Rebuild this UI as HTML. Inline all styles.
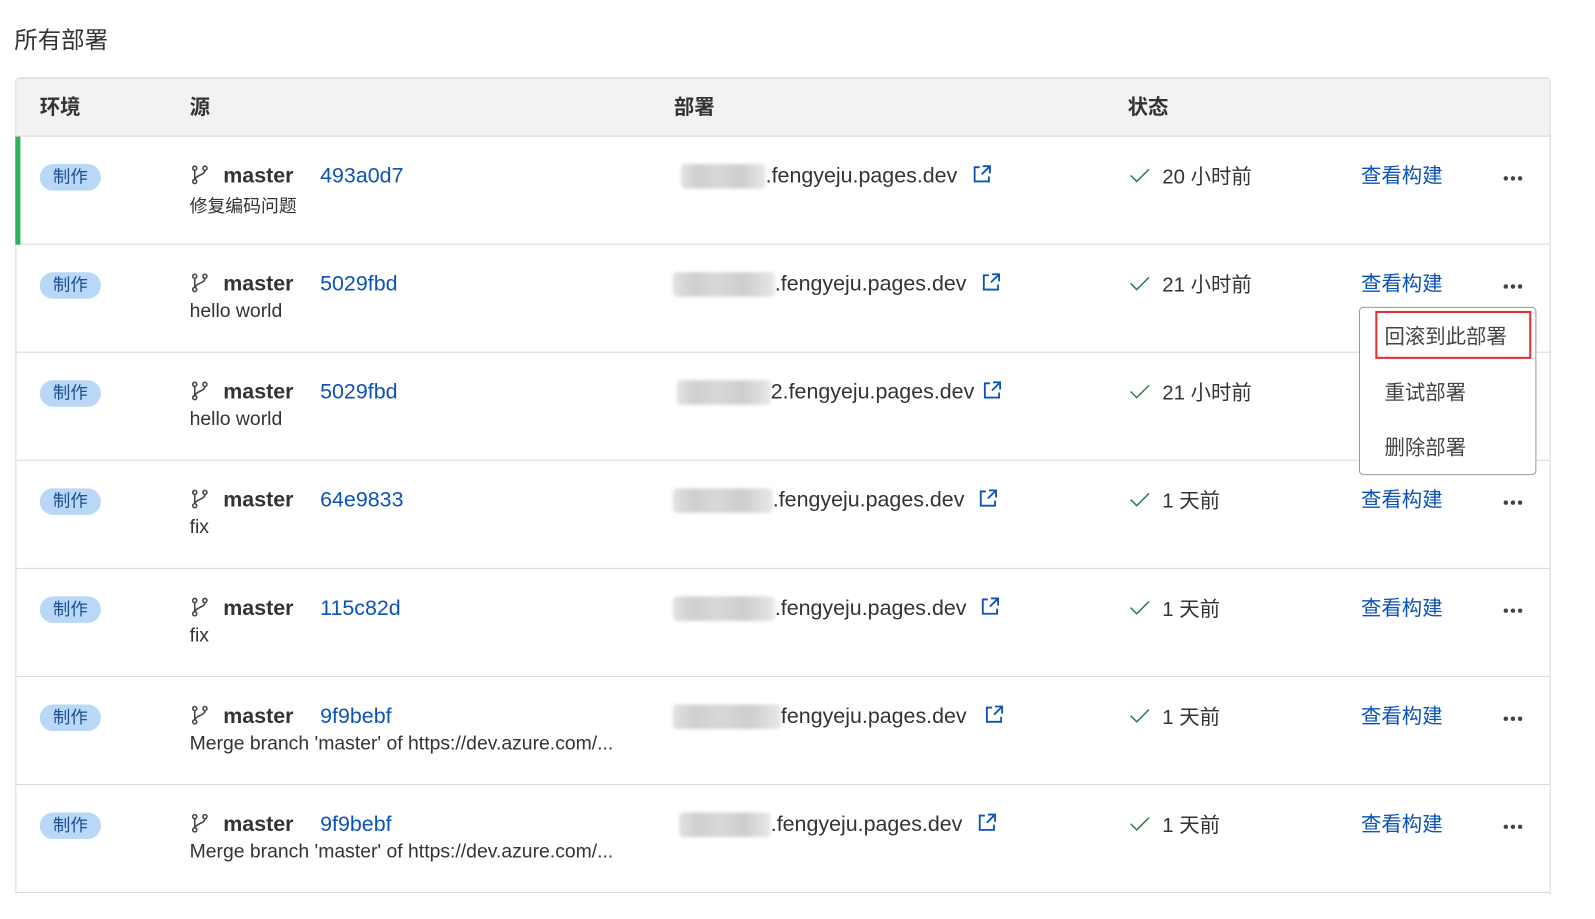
<!DOCTYPE html>
<html><head><meta charset="utf-8"><style>
*{margin:0;padding:0;box-sizing:border-box}
body{width:1595px;height:919px;background:#fff;font-family:"Liberation Sans","Noto Sans CJK SC",sans-serif;color:#333;position:relative;overflow:hidden}
#w{position:absolute;left:0;top:0;width:1565px;height:901px;transform:scale(1.0195);transform-origin:0 0}
.title{position:absolute;left:14px;top:20px;font-size:23px;color:#333}
.tbl{position:absolute;left:15px;top:76px;width:1506px;height:801px;border:1px solid #cfcfcf;border-radius:4px 4px 0 0;border-bottom:none}
.hdr{position:absolute;left:0;top:0;width:100%;height:57px;background:#f2f2f2;border-bottom:1px solid #d6d6d6}
.hdr span{position:absolute;top:12px;font-size:20px;font-weight:bold;color:#333}
.row{position:absolute;left:0;width:100%;height:106px;border-bottom:1px solid #d9d9d9}
.a{position:absolute;white-space:nowrap}
.badge{left:23px;top:27px;width:60px;height:26px;border-radius:13px;background:#b9d7f7;color:#1d4f91;font-size:17px;text-align:center;line-height:26px}
.br{left:171px;top:28px}
.m{left:203px;top:27px;font-size:21px;font-weight:bold;color:#333}
.h{left:298px;top:27px;font-size:21px;color:#0b53b6}
.s{left:170px;top:55px;font-size:19px;color:#333}
.s.cn{font-size:17.5px}
.blur{top:27px;height:24px;background:linear-gradient(90deg,#e2e2e2,#cfcfcf 20%,#d8d8d8 45%,#cdcdcd 70%,#e8e8e8);border-radius:4px;filter:blur(1.5px)}
.d{top:27px;font-size:21px;color:#333}
.ck{left:1092px;top:31px}
.t{left:1124px;top:23px;font-size:20px;color:#333}
.v{left:1319px;top:22px;font-size:20px;color:#0b53b6}
.dots{left:1458px;top:38px}
.menu{position:absolute;left:1333px;top:301px;width:174px;height:165px;border:1px solid #9a9a9a;border-radius:4px;background:#fff}
.menu div{position:absolute;left:24px;font-size:20px;color:#444}
.red{position:absolute;left:1349px;top:305px;width:153px;height:47px;border:2px solid #e03030}
</style></head><body><div id="w">
<div class="title">所有部署</div>
<div class="tbl">
<div class="hdr"><span style="left:23px">环境</span><span style="left:170px">源</span><span style="left:645px">部署</span><span style="left:1090px">状态</span></div>
<div style="position:absolute;left:-1px;top:57px;width:5px;height:106px;background:#2fae5c;z-index:2"></div>

<div class="row" style="top:57px">
<div class="a badge">制作</div>
<svg class="a br" width="18" height="20" viewBox="0 0 18 20"><g fill="none" stroke="#444" stroke-width="1.5"><circle cx="4" cy="3" r="2"/><circle cx="4" cy="16" r="2"/><circle cx="14" cy="3" r="2"/><path d="M4 5v9M14 5c0 5-8 4-10 9"/></g></svg>
<div class="a m">master</div><div class="a h">493a0d7</div><div class="a s cn">修复编码问题</div>
<div class="a blur" style="left:652px;width:83px"></div><div class="a d" style="left:735px">.fengyeju.pages.dev</div>
<svg class="a" style="left:937px;top:27px" width="20" height="20" viewBox="0 0 20 20"><path d="M8 3H3v14h14v-5M11 2h7v7M18 2l-8 8" fill="none" stroke="#0b53b6" stroke-width="1.8"/></svg>
<svg class="a ck" width="20" height="14" viewBox="0 0 20 14"><path d="M1 7l6 6L19 1" fill="none" stroke="#2f7d4f" stroke-width="1.5"/></svg>
<div class="a t">20 小时前</div><div class="a v">查看构建</div><svg class="a dots" width="20" height="6"><circle cx="3" cy="3" r="2.2" fill="#444"/><circle cx="10" cy="3" r="2.2" fill="#444"/><circle cx="17" cy="3" r="2.2" fill="#444"/></svg>
</div>

<div class="row" style="top:163px">
<div class="a badge">制作</div>
<svg class="a br" width="18" height="20" viewBox="0 0 18 20"><g fill="none" stroke="#444" stroke-width="1.5"><circle cx="4" cy="3" r="2"/><circle cx="4" cy="16" r="2"/><circle cx="14" cy="3" r="2"/><path d="M4 5v9M14 5c0 5-8 4-10 9"/></g></svg>
<div class="a m">master</div><div class="a h">5029fbd</div><div class="a s">hello world</div>
<div class="a blur" style="left:644px;width:100px"></div><div class="a d" style="left:744px">.fengyeju.pages.dev</div>
<svg class="a" style="left:946px;top:27px" width="20" height="20" viewBox="0 0 20 20"><path d="M8 3H3v14h14v-5M11 2h7v7M18 2l-8 8" fill="none" stroke="#0b53b6" stroke-width="1.8"/></svg>
<svg class="a ck" width="20" height="14" viewBox="0 0 20 14"><path d="M1 7l6 6L19 1" fill="none" stroke="#2f7d4f" stroke-width="1.5"/></svg>
<div class="a t">21 小时前</div><div class="a v">查看构建</div><svg class="a dots" width="20" height="6"><circle cx="3" cy="3" r="2.2" fill="#444"/><circle cx="10" cy="3" r="2.2" fill="#444"/><circle cx="17" cy="3" r="2.2" fill="#444"/></svg>
</div>

<div class="row" style="top:269px">
<div class="a badge">制作</div>
<svg class="a br" width="18" height="20" viewBox="0 0 18 20"><g fill="none" stroke="#444" stroke-width="1.5"><circle cx="4" cy="3" r="2"/><circle cx="4" cy="16" r="2"/><circle cx="14" cy="3" r="2"/><path d="M4 5v9M14 5c0 5-8 4-10 9"/></g></svg>
<div class="a m">master</div><div class="a h">5029fbd</div><div class="a s">hello world</div>
<div class="a blur" style="left:648px;width:92px"></div><div class="a d" style="left:740px">2.fengyeju.pages.dev</div>
<svg class="a" style="left:947px;top:27px" width="20" height="20" viewBox="0 0 20 20"><path d="M8 3H3v14h14v-5M11 2h7v7M18 2l-8 8" fill="none" stroke="#0b53b6" stroke-width="1.8"/></svg>
<svg class="a ck" width="20" height="14" viewBox="0 0 20 14"><path d="M1 7l6 6L19 1" fill="none" stroke="#2f7d4f" stroke-width="1.5"/></svg>
<div class="a t">21 小时前</div>
</div>

<div class="row" style="top:375px">
<div class="a badge">制作</div>
<svg class="a br" width="18" height="20" viewBox="0 0 18 20"><g fill="none" stroke="#444" stroke-width="1.5"><circle cx="4" cy="3" r="2"/><circle cx="4" cy="16" r="2"/><circle cx="14" cy="3" r="2"/><path d="M4 5v9M14 5c0 5-8 4-10 9"/></g></svg>
<div class="a m">master</div><div class="a h">64e9833</div><div class="a s">fix</div>
<div class="a blur" style="left:644px;width:98px"></div><div class="a d" style="left:742px">.fengyeju.pages.dev</div>
<svg class="a" style="left:943px;top:27px" width="20" height="20" viewBox="0 0 20 20"><path d="M8 3H3v14h14v-5M11 2h7v7M18 2l-8 8" fill="none" stroke="#0b53b6" stroke-width="1.8"/></svg>
<svg class="a ck" width="20" height="14" viewBox="0 0 20 14"><path d="M1 7l6 6L19 1" fill="none" stroke="#2f7d4f" stroke-width="1.5"/></svg>
<div class="a t">1 天前</div><div class="a v">查看构建</div><svg class="a dots" width="20" height="6"><circle cx="3" cy="3" r="2.2" fill="#444"/><circle cx="10" cy="3" r="2.2" fill="#444"/><circle cx="17" cy="3" r="2.2" fill="#444"/></svg>
</div>

<div class="row" style="top:481px">
<div class="a badge">制作</div>
<svg class="a br" width="18" height="20" viewBox="0 0 18 20"><g fill="none" stroke="#444" stroke-width="1.5"><circle cx="4" cy="3" r="2"/><circle cx="4" cy="16" r="2"/><circle cx="14" cy="3" r="2"/><path d="M4 5v9M14 5c0 5-8 4-10 9"/></g></svg>
<div class="a m">master</div><div class="a h">115c82d</div><div class="a s">fix</div>
<div class="a blur" style="left:644px;width:100px"></div><div class="a d" style="left:744px">.fengyeju.pages.dev</div>
<svg class="a" style="left:945px;top:27px" width="20" height="20" viewBox="0 0 20 20"><path d="M8 3H3v14h14v-5M11 2h7v7M18 2l-8 8" fill="none" stroke="#0b53b6" stroke-width="1.8"/></svg>
<svg class="a ck" width="20" height="14" viewBox="0 0 20 14"><path d="M1 7l6 6L19 1" fill="none" stroke="#2f7d4f" stroke-width="1.5"/></svg>
<div class="a t">1 天前</div><div class="a v">查看构建</div><svg class="a dots" width="20" height="6"><circle cx="3" cy="3" r="2.2" fill="#444"/><circle cx="10" cy="3" r="2.2" fill="#444"/><circle cx="17" cy="3" r="2.2" fill="#444"/></svg>
</div>

<div class="row" style="top:587px">
<div class="a badge">制作</div>
<svg class="a br" width="18" height="20" viewBox="0 0 18 20"><g fill="none" stroke="#444" stroke-width="1.5"><circle cx="4" cy="3" r="2"/><circle cx="4" cy="16" r="2"/><circle cx="14" cy="3" r="2"/><path d="M4 5v9M14 5c0 5-8 4-10 9"/></g></svg>
<div class="a m">master</div><div class="a h">9f9bebf</div><div class="a s">Merge branch 'master' of https://dev.azure.com/...</div>
<div class="a blur" style="left:644px;width:106px"></div><div class="a d" style="left:750px">fengyeju.pages.dev</div>
<svg class="a" style="left:949px;top:27px" width="20" height="20" viewBox="0 0 20 20"><path d="M8 3H3v14h14v-5M11 2h7v7M18 2l-8 8" fill="none" stroke="#0b53b6" stroke-width="1.8"/></svg>
<svg class="a ck" width="20" height="14" viewBox="0 0 20 14"><path d="M1 7l6 6L19 1" fill="none" stroke="#2f7d4f" stroke-width="1.5"/></svg>
<div class="a t">1 天前</div><div class="a v">查看构建</div><svg class="a dots" width="20" height="6"><circle cx="3" cy="3" r="2.2" fill="#444"/><circle cx="10" cy="3" r="2.2" fill="#444"/><circle cx="17" cy="3" r="2.2" fill="#444"/></svg>
</div>

<div class="row" style="top:693px">
<div class="a badge">制作</div>
<svg class="a br" width="18" height="20" viewBox="0 0 18 20"><g fill="none" stroke="#444" stroke-width="1.5"><circle cx="4" cy="3" r="2"/><circle cx="4" cy="16" r="2"/><circle cx="14" cy="3" r="2"/><path d="M4 5v9M14 5c0 5-8 4-10 9"/></g></svg>
<div class="a m">master</div><div class="a h">9f9bebf</div><div class="a s">Merge branch 'master' of https://dev.azure.com/...</div>
<div class="a blur" style="left:650px;width:90px"></div><div class="a d" style="left:740px">.fengyeju.pages.dev</div>
<svg class="a" style="left:942px;top:27px" width="20" height="20" viewBox="0 0 20 20"><path d="M8 3H3v14h14v-5M11 2h7v7M18 2l-8 8" fill="none" stroke="#0b53b6" stroke-width="1.8"/></svg>
<svg class="a ck" width="20" height="14" viewBox="0 0 20 14"><path d="M1 7l6 6L19 1" fill="none" stroke="#2f7d4f" stroke-width="1.5"/></svg>
<div class="a t">1 天前</div><div class="a v">查看构建</div><svg class="a dots" width="20" height="6"><circle cx="3" cy="3" r="2.2" fill="#444"/><circle cx="10" cy="3" r="2.2" fill="#444"/><circle cx="17" cy="3" r="2.2" fill="#444"/></svg>
</div>
</div>

<div class="menu"><div style="top:12px">回滚到此部署</div><div style="top:67px">重试部署</div><div style="top:121px">删除部署</div></div>
<div class="red"></div>
</div></body></html>
